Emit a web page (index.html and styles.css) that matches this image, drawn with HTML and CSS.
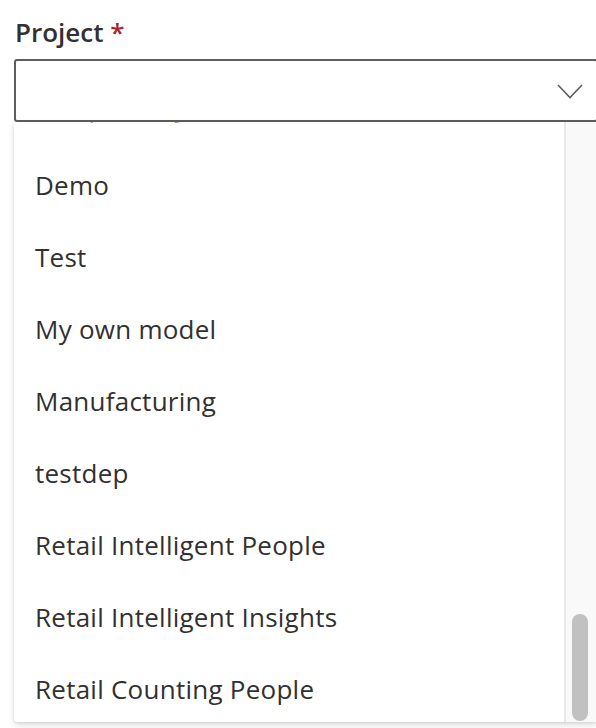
FILE: index.html
```html
<!DOCTYPE html>
<html>
<head>
<meta charset="utf-8">
<link rel="stylesheet" href="styles.css">
</head>
<body>
<div class="field">
  <div class="label">Project <span class="req">*</span></div>
  <div class="select">
    <svg class="chev" width="26" height="15" viewBox="0 0 26 15"><polyline points="1,1 13,13.5 25,1" fill="none" stroke="#605e5c" stroke-width="1.6"/></svg>
  </div>
  <div class="menu">
    <div class="list">
      <div class="items">
        <div class="item item-partial">Sample Project</div>
        <div class="item">Demo</div>
        <div class="item">Test</div>
        <div class="item">My own model</div>
        <div class="item">Manufacturing</div>
        <div class="item">testdep</div>
        <div class="item">Retail Intelligent People</div>
        <div class="item">Retail Intelligent Insights</div>
        <div class="item">Retail Counting People</div>
      </div>
    </div>
    <div class="track"><div class="thumb"></div></div>
  </div>
</div>
</body>
</html>
```

FILE: styles.css
```css
html, body {
  margin: 0;
  padding: 0;
  background: #ffffff;
  overflow: hidden;
}
body {
  width: 596px;
  height: 728px;
  font-family: "Open Sans", "Noto Sans", sans-serif;
  color: #323130;
}
.field {
  padding: 14px 0 0 14px;
  width: 584px;
}
.label {
  font-weight: 600;
  font-size: 26px;
  line-height: 36px;
  height: 45px;
  padding-left: 1px;
  color: #323130;
}
.req {
  color: #a4262c;
}
.select {
  box-sizing: border-box;
  height: 63px;
  border: 2px solid #605e5c;
  border-radius: 3px;
  display: flex;
  align-items: center;
  justify-content: flex-end;
  padding-right: 13px;
}
.chev {
  display: block;
  margin-top: 2px;
}
.menu {
  display: flex;
  height: 600px;
  background: #ffffff;
  border-radius: 0 0 4px 4px;
  box-shadow: 0 3px 7px rgba(0,0,0,0.13), 0 1px 3px rgba(0,0,0,0.08);
  overflow: hidden;
}
.list {
  flex: 1;
  overflow: hidden;
}
.items {
  margin-top: -45px;
}
.item {
  box-sizing: border-box;
  height: 72px;
  display: flex;
  align-items: center;
  padding-left: 21px;
  font-size: 26px;
  letter-spacing: 0.25px;
  color: #323130;
  white-space: nowrap;
}
.item-partial {
  padding-bottom: 12px;
  color: #a19f9d;
}
.track {
  width: 26px;
  flex: none;
  background: #f9f9f9;
  border-left: 2px solid #e8e8e8;
  display: flex;
  flex-direction: column;
  justify-content: flex-end;
  padding: 0 0 1px 6px;
}
.thumb {
  width: 16px;
  height: 107px;
  border-radius: 8px;
  background: #c1c1c1;
}
```
